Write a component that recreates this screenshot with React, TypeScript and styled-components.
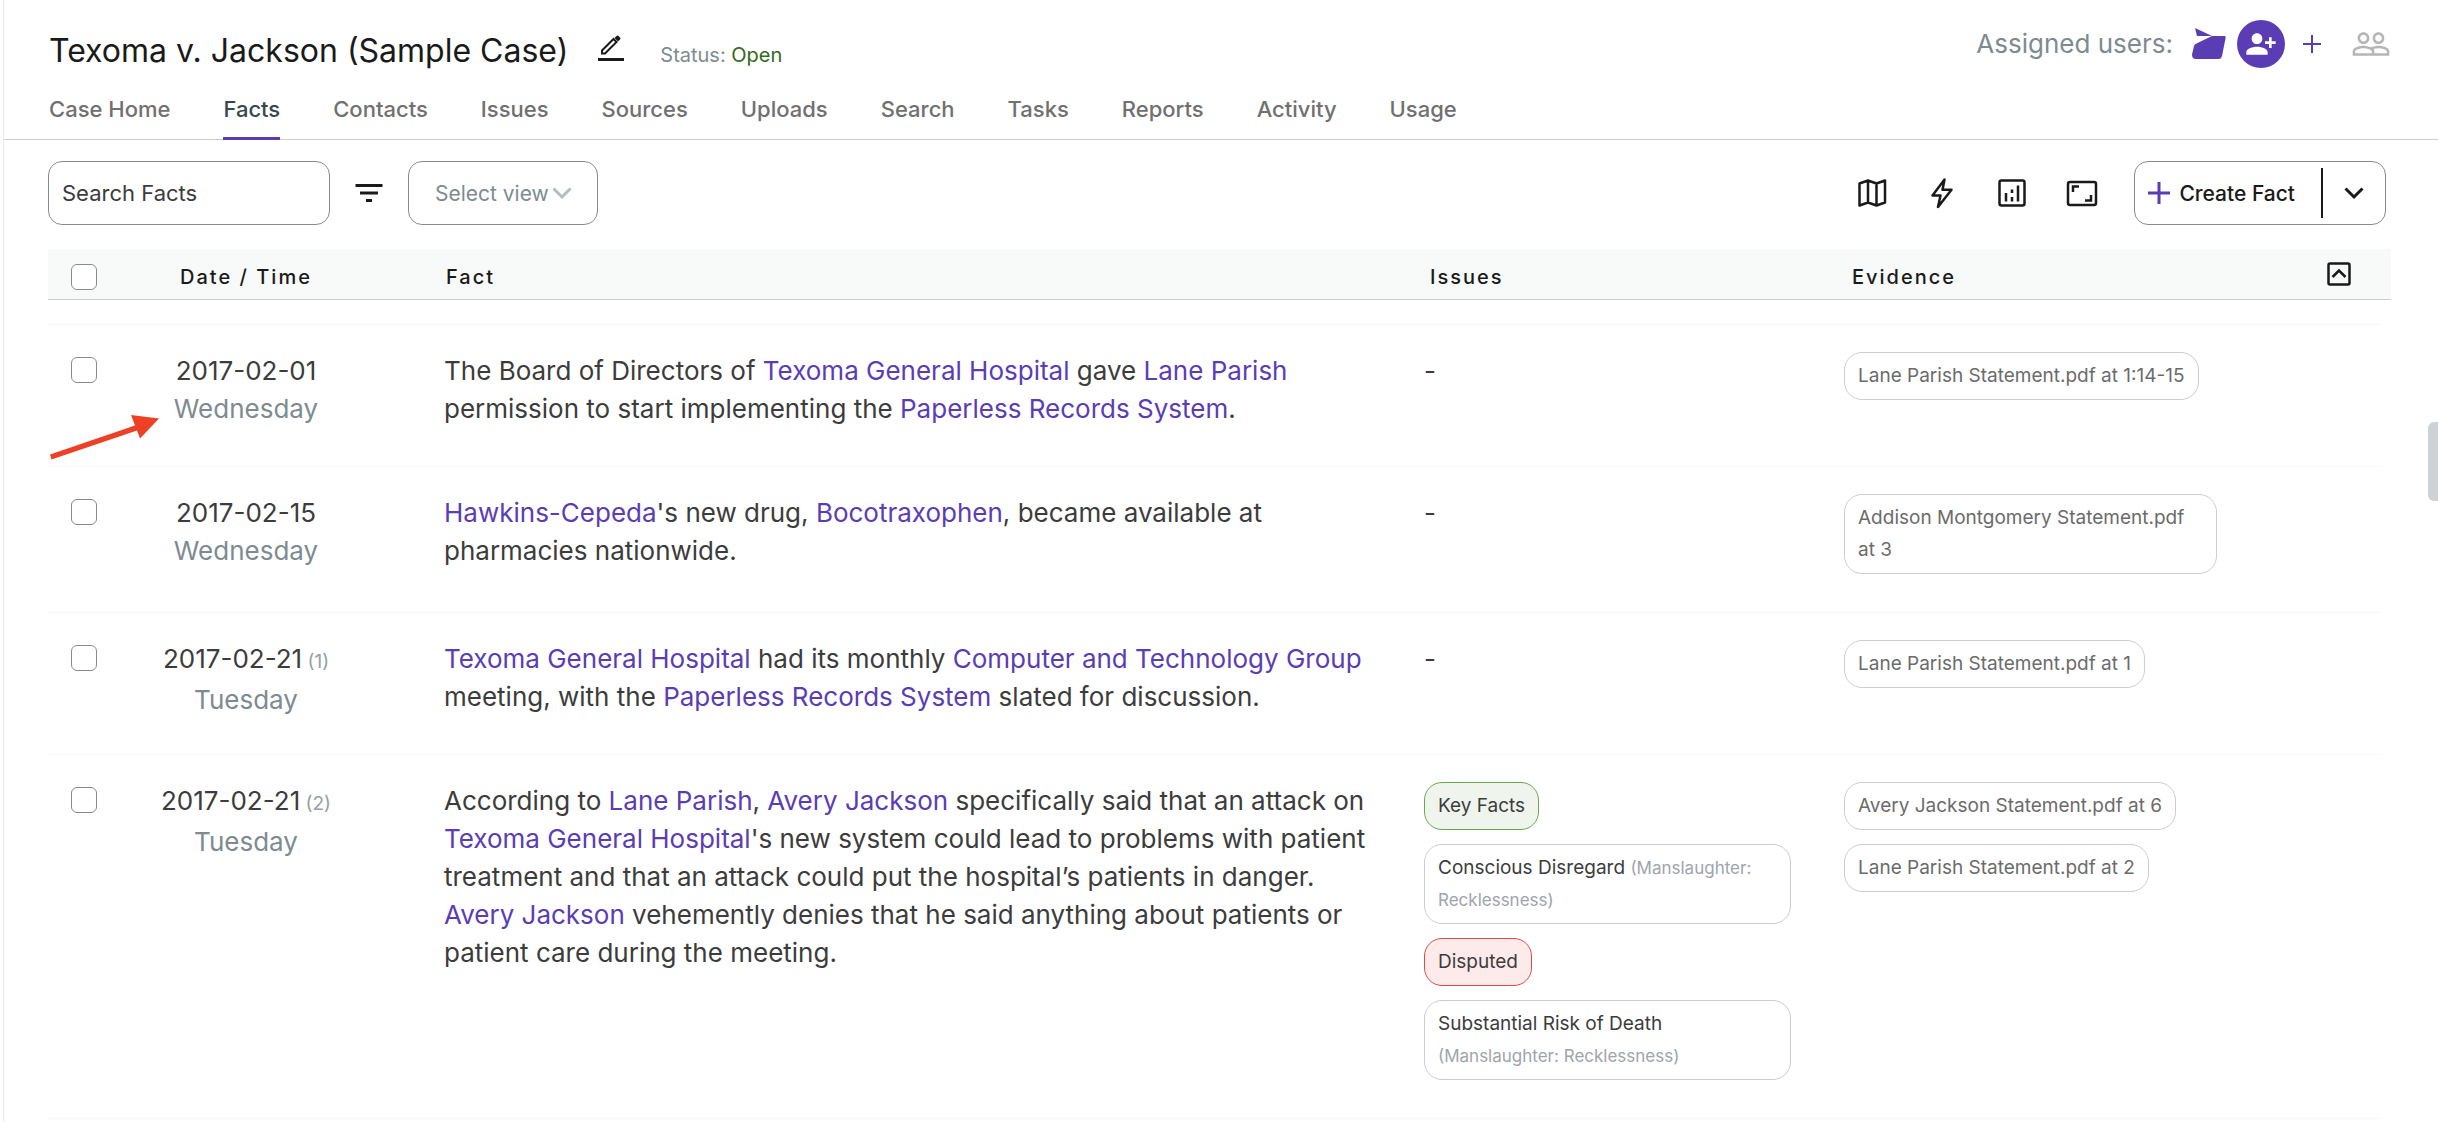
import React from "react";
import styled, { createGlobalStyle, css } from "styled-components";
import { MdFilterList, MdPeopleOutline, MdPersonAddAlt1 } from "react-icons/md";

const purple = "#5a3db5";
const ink = "#1a1a1a";
const text = "#3c3c3c";
const slate = "#7d8b91";
const line = "#cbcdce";

const GlobalStyle = createGlobalStyle`
  * { box-sizing: border-box; }
  body { margin: 0; background: #fff; }
  body, button, input, select { font-family: Inter, "Liberation Sans", sans-serif; }
`;

const Page = styled.div`
  position: relative;
  min-height: 100vh;
  margin-left: 3px;
  border-left: 1px solid #e9e9f6;
  color: ${text};
`;

const Header = styled.header`
  border-bottom: 1px solid ${line};
`;

const TopBar = styled.div`
  display: flex;
  justify-content: space-between;
  align-items: flex-start;
  padding: 0 47px 0 45px;
`;

const TitleGroup = styled.div`
  display: flex;
  align-items: baseline;
  padding-top: 31px;
`;

const Title = styled.h1`
  margin: 0;
  font-size: 32px;
  line-height: 40px;
  font-weight: 400;
  color: ${ink};
`;

const IconButton = styled.button`
  display: flex;
  padding: 0;
  border: 0;
  background: none;
  color: ${ink};
  cursor: pointer;
`;

const EditButton = styled(IconButton)`
  align-self: flex-start;
  margin: 4px 36px 0 30px;
`;

const Status = styled.p`
  margin: 0;
  font-size: 20px;
  color: ${slate};
`;

const StatusValue = styled.span`
  color: #34691b;
`;

const UserGroup = styled.div`
  display: flex;
  align-items: center;
  height: 48px;
  margin-top: 20px;
`;

const UsersLabel = styled.span`
  margin-right: 18px;
  font-size: 26px;
  line-height: 38px;
  color: ${slate};
`;

const Avatar = styled.button`
  display: flex;
  align-items: center;
  justify-content: center;
  width: 48px;
  height: 48px;
  margin: 0 18px 0 10px;
  padding: 0;
  border: 0;
  border-radius: 50%;
  background: ${purple};
  color: #fff;
`;

const PeopleButton = styled(IconButton)`
  margin-left: 30px;
  color: #b5b5b5;
`;

const Tabs = styled.nav`
  display: flex;
  gap: 53px;
  margin: 24px 0 -1px;
  padding-left: 45px;
`;

const Tab = styled.a<{ $active?: boolean }>`
  padding-bottom: 13px;
  border-bottom: 3px solid ${(p) => (p.$active ? purple : "transparent")};
  font-size: 22px;
  line-height: 29px;
  font-weight: 500;
  color: ${(p) => (p.$active ? "#37474f" : "#707070")};
  text-decoration: none;
`;

const Main = styled.main`
  padding: 21px 47px 0 44px;
`;

const Toolbar = styled.div`
  display: flex;
  justify-content: space-between;
  align-items: center;
  padding: 0 5px 24px 0;
`;

const ToolGroup = styled.div<{ $gap: number }>`
  display: flex;
  align-items: center;
  gap: ${(p) => p.$gap}px;
`;

const field = css`
  height: 64px;
  border: 1px solid #8a8a8a;
  border-radius: 14px;
  background: #fff;
`;

const SearchInput = styled.input`
  ${field}
  width: 282px;
  padding: 0 13px;
  font-size: 22px;
  color: ${text};
  &::placeholder { color: ${text}; opacity: 1; }
`;

const SelectBox = styled.div`
  ${field}
  display: grid;
  width: 190px;
  align-items: center;
  svg, select { grid-area: 1 / 1; }
  svg { justify-self: end; margin-right: 25px; pointer-events: none; }
`;

const Select = styled.select`
  height: 100%;
  width: 100%;
  padding: 0 0 0 26px;
  border: 0;
  background: none;
  appearance: none;
  font-size: 21px;
  color: ${slate};
`;

const SplitButton = styled.div`
  ${field}
  display: flex;
  align-items: center;
`;

const CreateButton = styled(IconButton)`
  align-items: center;
  gap: 9px;
  padding: 0 26px 0 13px;
  font-size: 21px;
  font-weight: 500;
`;

const MenuButton = styled(IconButton)`
  align-items: center;
  height: 50px;
  padding: 0 21px;
  border-left: 2px solid ${ink};
`;

const Table = styled.table`
  width: 100%;
  table-layout: fixed;
  border-collapse: separate;
  border-spacing: 0;
  text-align: left;
`;

const Col = styled.col<{ $width?: number }>`
  ${(p) => p.$width && `width: ${p.$width}px;`}
`;

const HeadCell = styled.th<{ $inset?: number }>`
  height: 51px;
  padding: 6px 0 0 ${(p) => p.$inset || 0}px;
  border-bottom: 1px solid ${line};
  background: #f8faf9;
  font-size: 20px;
  line-height: 24px;
  font-weight: 500;
  letter-spacing: 2px;
  color: ${ink};
`;

const DateHead = styled(HeadCell)`
  padding-right: 72px;
  text-align: center;
`;

const ActionHead = styled(HeadCell)`
  padding-top: 0;
`;

const Spacer = styled.td`
  height: 25px;
  border-bottom: 1px solid #f6f7f7;
`;

const Cell = styled.td<{ $right?: number }>`
  padding: 27px ${(p) => p.$right || 0}px 38px 0;
  border-bottom: 1px solid #f6f7f7;
  vertical-align: top;
  font-size: 26px;
  line-height: 38px;
`;

const CheckCell = styled(Cell)`
  padding: 32px 0 0 23px;
`;

const DateCell = styled(Cell)`
  padding-bottom: 32px;
  text-align: center;
`;

const Checkbox = styled.input`
  display: block;
  appearance: none;
  width: 26px;
  height: 26px;
  margin: 0;
  border: 1px solid #8a8a8a;
  border-radius: 6px;
  background: #fff;
`;

const Weekday = styled.div`
  color: ${slate};
`;

const Order = styled.span`
  font-size: 19px;
  color: #94a0a5;
`;

const FactLink = styled.a`
  color: ${purple};
  text-decoration: none;
`;

const ChipList = styled.div`
  display: flex;
  flex-direction: column;
  align-items: flex-start;
  gap: 14px;
`;

const tones = {
  plain: { border: line, fill: "#fff" },
  green: { border: "#6aa84f", fill: "#eff5ed" },
  red: { border: "#e04a45", fill: "#fcebea" },
};

const Chip = styled.span<{ $tone?: keyof typeof tones }>`
  padding: 7px 13px;
  border: 1px solid ${(p) => tones[p.$tone || "plain"].border};
  border-radius: 18px;
  background: ${(p) => tones[p.$tone || "plain"].fill};
  font-size: 19px;
  line-height: 32px;
  color: ${text};
`;

const EvidenceChip = styled(Chip)`
  color: #6b6b6b;
  text-decoration: none;
`;

const Parent = styled.span`
  font-size: 17px;
  line-height: 24px;
  color: #9ea4ac;
`;

const Thumb = styled.div`
  position: absolute;
  top: 422px;
  right: 0;
  width: 10px;
  height: 79px;
  border-radius: 6px 0 0 6px;
  background: #ccd2d6;
`;

const Arrow = styled.svg`
  position: absolute;
  top: 410px;
  left: 44px;
  pointer-events: none;
`;

const Chevron = ({ color, width }: { color: string; width: number }) => (
  <svg width="20" height="14" viewBox="0 0 20 14" fill="none" stroke={color} strokeWidth={width}>
    <path d="M1.5 2.5 10 11l8.5-8.5" />
  </svg>
);

const Plus = ({ size, width }: { size: number; width: number }) => (
  <svg width={size} height={size} viewBox={`0 0 ${size} ${size}`} stroke={purple} strokeWidth={width}>
    <path d={`M${size / 2} 0v${size}M0 ${size / 2}h${size}`} />
  </svg>
);

const PencilIcon = () => (
  <svg width="26" height="28" viewBox="0 0 26 28">
    <path d="M0 23h26v3H0z" fill={ink} />
    <path d="M4 15.500 15.500 4l3 3L7 18.500H4z" fill="none" stroke={ink} strokeWidth="2" />
    <path d="m16.500 3 2-2q1-1 2 0l1.500 1.500q1 1 0 2l-2 2z" fill={ink} />
  </svg>
);

const BadgeIcon = () => (
  <svg width="36" height="34" viewBox="0 0 36 34" fill={purple}>
    <path d="M4 1 21 9H6z" />
    <path d="M21 9h12.500q1.500 0 1.200 1.500L31 29q-.8 3-3.500 3H5q-4 0-4-4.500L3 19q.5-1.500 2-2.300z" />
  </svg>
);

const toolIcon = {
  width: 36,
  height: 36,
  viewBox: "0 0 36 36",
  fill: "none",
  stroke: ink,
  strokeWidth: 2.5,
};

const MapIcon = () => (
  <svg {...toolIcon}>
    <path d="M5.500 8.500 14 5.500l8.500 3 8.500-3v22l-8.500 3-8.500-3-8.500 3zM14 5.500v22M22.500 8.500v22" strokeLinejoin="round" />
  </svg>
);

const BoltIcon = () => (
  <svg {...toolIcon}>
    <path d="M20.500 4.500 8.500 20.500h8l-2.500 11.500 13.500-17.300h-9z" strokeLinejoin="round" />
  </svg>
);

const ChartIcon = () => (
  <svg {...toolIcon}>
    <rect x="5.500" y="5.500" width="25" height="25" rx="2" />
    <path d="M12 18v8.500M18 14.500v3.500M18 22v4.500M24 10.500v16" />
  </svg>
);

const FrameIcon = () => (
  <svg {...toolIcon}>
    <rect x="4" y="7" width="28" height="23" rx="2" />
    <path d="M9 17v-5.500h6M27 20v5.500h-6" />
  </svg>
);

const CollapseIcon = () => (
  <svg width="24" height="24" viewBox="0 0 24 24" fill="none" stroke={ink} strokeWidth="2.500">
    <rect x="1.500" y="1.500" width="21" height="21" rx="1.500" />
    <path d="m5.500 15 6.500-6.500 6.500 6.500" />
  </svg>
);

const tabs = ["Case Home", "Facts", "Contacts", "Issues", "Sources", "Uploads", "Search", "Tasks", "Reports", "Activity", "Usage"];

const L = ({ children }: { children: React.ReactNode }) => <FactLink href="#contact">{children}</FactLink>;

type Issue = { name: string; parent?: string; tone?: keyof typeof tones };
type Fact = { date: string; order?: number; day: string; body: React.ReactNode; issues: Issue[]; evidence: string[] };

const facts: Fact[] = [
  {
    date: "2017-02-01",
    day: "Wednesday",
    body: (
      <>
        The Board of Directors of <L>Texoma General Hospital</L> gave <L>Lane Parish</L> permission to start
        implementing the <L>Paperless Records System</L>.
      </>
    ),
    issues: [],
    evidence: ["Lane Parish Statement.pdf at 1:14-15"],
  },
  {
    date: "2017-02-15",
    day: "Wednesday",
    body: (
      <>
        <L>Hawkins-Cepeda</L>'s new drug, <L>Bocotraxophen</L>, became available at pharmacies nationwide.
      </>
    ),
    issues: [],
    evidence: ["Addison Montgomery Statement.pdf at 3"],
  },
  {
    date: "2017-02-21",
    order: 1,
    day: "Tuesday",
    body: (
      <>
        <L>Texoma General Hospital</L> had its monthly <L>Computer and Technology Group</L> meeting, with the{" "}
        <L>Paperless Records System</L> slated for discussion.
      </>
    ),
    issues: [],
    evidence: ["Lane Parish Statement.pdf at 1"],
  },
  {
    date: "2017-02-21",
    order: 2,
    day: "Tuesday",
    body: (
      <>
        According to <L>Lane Parish</L>, <L>Avery Jackson</L> specifically said that an attack on{" "}
        <L>Texoma General Hospital</L>'s new system could lead to problems with patient treatment and that an attack
        could put the hospital’s patients in danger. <L>Avery Jackson</L> vehemently denies that he said anything
        about patients or patient care during the meeting.
      </>
    ),
    issues: [
      { name: "Key Facts", tone: "green" },
      { name: "Conscious Disregard", parent: "(Manslaughter: Recklessness)" },
      { name: "Disputed", tone: "red" },
      { name: "Substantial Risk of Death", parent: "(Manslaughter: Recklessness)" },
    ],
    evidence: ["Avery Jackson Statement.pdf at 6", "Lane Parish Statement.pdf at 2"],
  },
];

const FactRow = ({ fact }: { fact: Fact }) => (
  <tr>
    <CheckCell>
      <Checkbox type="checkbox" aria-label={`Select fact of ${fact.date}`} />
    </CheckCell>
    <DateCell $right={72}>
      <div>
        {fact.date}
        {fact.order && <Order> ({fact.order})</Order>}
      </div>
      <Weekday>{fact.day}</Weekday>
    </DateCell>
    <Cell $right={52}>{fact.body}</Cell>
    <Cell $right={53}>
      {fact.issues.length === 0 ? (
        "-"
      ) : (
        <ChipList>
          {fact.issues.map((issue) => (
            <Chip key={issue.name} $tone={issue.tone}>
              {issue.name} {issue.parent && <Parent>{issue.parent}</Parent>}
            </Chip>
          ))}
        </ChipList>
      )}
    </Cell>
    <Cell>
      <ChipList>
        {fact.evidence.map((name) => (
          <EvidenceChip as="a" href="#evidence" key={name}>
            {name}
          </EvidenceChip>
        ))}
      </ChipList>
    </Cell>
    <Cell />
  </tr>
);

export default function App() {
  return (
    <Page>
      <GlobalStyle />
      <Header>
        <TopBar>
          <TitleGroup>
            <Title>Texoma v. Jackson (Sample Case)</Title>
            <EditButton aria-label="Edit case name">
              <PencilIcon />
            </EditButton>
            <Status>
              Status: <StatusValue>Open</StatusValue>
            </Status>
          </TitleGroup>
          <UserGroup>
            <UsersLabel>Assigned users:</UsersLabel>
            <BadgeIcon />
            <Avatar aria-label="Invite user">
              <MdPersonAddAlt1 size={32} />
            </Avatar>
            <IconButton aria-label="Add user">
              <Plus size={18} width={2} />
            </IconButton>
            <PeopleButton aria-label="Team">
              <MdPeopleOutline size={40} />
            </PeopleButton>
          </UserGroup>
        </TopBar>
        <Tabs>
          {tabs.map((name) => (
            <Tab key={name} href={`#${name}`} $active={name === "Facts"}>
              {name}
            </Tab>
          ))}
        </Tabs>
      </Header>
      <Main>
        <Toolbar>
          <ToolGroup $gap={21}>
            <SearchInput type="text" placeholder="Search Facts" aria-label="Search Facts" />
            <IconButton aria-label="Filter">
              <MdFilterList size={36} />
            </IconButton>
            <SelectBox>
              <Select aria-label="Select view" defaultValue="">
                <option value="">Select view</option>
              </Select>
              <Chevron color="#b4bec2" width={3} />
            </SelectBox>
          </ToolGroup>
          <ToolGroup $gap={34}>
            <IconButton aria-label="Map"><MapIcon /></IconButton>
            <IconButton aria-label="Quick actions"><BoltIcon /></IconButton>
            <IconButton aria-label="Charts"><ChartIcon /></IconButton>
            <IconButton aria-label="Full screen"><FrameIcon /></IconButton>
            <SplitButton>
              <CreateButton>
                <Plus size={22} width={3} />
                Create Fact
              </CreateButton>
              <MenuButton aria-label="More create options">
                <Chevron color={ink} width={3} />
              </MenuButton>
            </SplitButton>
          </ToolGroup>
        </Toolbar>
        <Table>
          <colgroup>
            <Col $width={72} />
            <Col $width={324} />
            <Col />
            <Col $width={420} />
            <Col $width={373} />
            <Col $width={163} />
            <Col $width={11} />
          </colgroup>
          <thead>
            <tr>
              <HeadCell $inset={23}>
                <Checkbox type="checkbox" aria-label="Select all facts" />
              </HeadCell>
              <DateHead>Date / Time</DateHead>
              <HeadCell $inset={2}>Fact</HeadCell>
              <HeadCell $inset={6}>Issues</HeadCell>
              <HeadCell $inset={8}>Evidence</HeadCell>
              <ActionHead $inset={110} colSpan={2}>
                <IconButton aria-label="Collapse all">
                  <CollapseIcon />
                </IconButton>
              </ActionHead>
            </tr>
          </thead>
          <tbody>
            <tr>
              <Spacer colSpan={6} />
            </tr>
            {facts.map((fact, i) => (
              <FactRow key={i} fact={fact} />
            ))}
          </tbody>
        </Table>
      </Main>
      <Arrow width="116" height="56" viewBox="0 0 116 56" fill="#ed4024">
        <path d="M2 44.500 87 15.500 83 5l28 3.500L92 28.500l-3-8L3.500 49.500z" />
      </Arrow>
      <Thumb />
    </Page>
  );
}
